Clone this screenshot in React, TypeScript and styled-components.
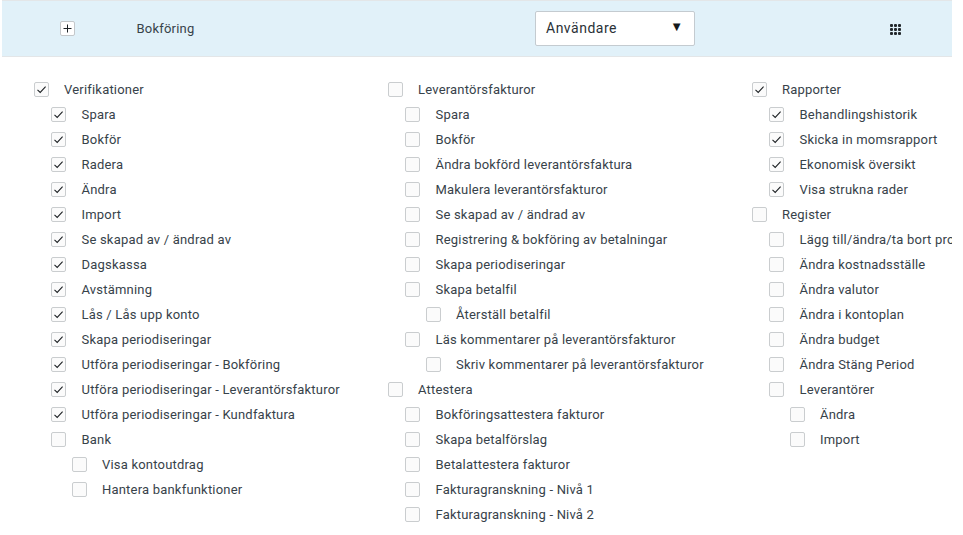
import styled, { createGlobalStyle } from "styled-components";

type Item = { label: string; level: number; checked?: boolean };

const col1: Item[] = [
  { label: "Verifikationer", level: 0, checked: true },
  { label: "Spara", level: 1, checked: true },
  { label: "Bokför", level: 1, checked: true },
  { label: "Radera", level: 1, checked: true },
  { label: "Ändra", level: 1, checked: true },
  { label: "Import", level: 1, checked: true },
  { label: "Se skapad av / ändrad av", level: 1, checked: true },
  { label: "Dagskassa", level: 1, checked: true },
  { label: "Avstämning", level: 1, checked: true },
  { label: "Lås / Lås upp konto", level: 1, checked: true },
  { label: "Skapa periodiseringar", level: 1, checked: true },
  { label: "Utföra periodiseringar - Bokföring", level: 1, checked: true },
  { label: "Utföra periodiseringar - Leverantörsfakturor", level: 1, checked: true },
  { label: "Utföra periodiseringar - Kundfaktura", level: 1, checked: true },
  { label: "Bank", level: 1 },
  { label: "Visa kontoutdrag", level: 2 },
  { label: "Hantera bankfunktioner", level: 2 },
];

const col2: Item[] = [
  { label: "Leverantörsfakturor", level: 0 },
  { label: "Spara", level: 1 },
  { label: "Bokför", level: 1 },
  { label: "Ändra bokförd leverantörsfaktura", level: 1 },
  { label: "Makulera leverantörsfakturor", level: 1 },
  { label: "Se skapad av / ändrad av", level: 1 },
  { label: "Registrering & bokföring av betalningar", level: 1 },
  { label: "Skapa periodiseringar", level: 1 },
  { label: "Skapa betalfil", level: 1 },
  { label: "Återställ betalfil", level: 2 },
  { label: "Läs kommentarer på leverantörsfakturor", level: 1 },
  { label: "Skriv kommentarer på leverantörsfakturor", level: 2 },
  { label: "Attestera", level: 0 },
  { label: "Bokföringsattestera fakturor", level: 1 },
  { label: "Skapa betalförslag", level: 1 },
  { label: "Betalattestera fakturor", level: 1 },
  { label: "Fakturagranskning - Nivå 1", level: 1 },
  { label: "Fakturagranskning - Nivå 2", level: 1 },
];

const col3: Item[] = [
  { label: "Rapporter", level: 0, checked: true },
  { label: "Behandlingshistorik", level: 1, checked: true },
  { label: "Skicka in momsrapport", level: 1, checked: true },
  { label: "Ekonomisk översikt", level: 1, checked: true },
  { label: "Visa strukna rader", level: 1, checked: true },
  { label: "Register", level: 0 },
  { label: "Lägg till/ändra/ta bort projekt", level: 1 },
  { label: "Ändra kostnadsställe", level: 1 },
  { label: "Ändra valutor", level: 1 },
  { label: "Ändra i kontoplan", level: 1 },
  { label: "Ändra budget", level: 1 },
  { label: "Ändra Stäng Period", level: 1 },
  { label: "Leverantörer", level: 1 },
  { label: "Ändra", level: 2 },
  { label: "Import", level: 2 },
];

const columns = [
  { items: col1, width: 354 },
  { items: col2, width: 364 },
  { items: col3, width: 200 },
];

export default function App() {
  return (
    <Page>
      <GlobalStyle />
      <Header>
        <ExpandCell>
          <ExpandButton>
            <svg width="9" height="9" viewBox="0 0 9 9">
              <path d="M4.5 0.5v8M0.5 4.5h8" stroke="#1c2226" strokeWidth="1" fill="none" />
            </svg>
          </ExpandButton>
        </ExpandCell>
        <Title>Bokföring</Title>
        <UserSelect>
          <SelectText>Användare</SelectText>
          <Arrow>▼</Arrow>
        </UserSelect>
        <GridIcon>
          {Array.from({ length: 9 }).map((_, i) => (
            <i key={i} />
          ))}
        </GridIcon>
      </Header>
      <Columns>
        {columns.map((column, c) => (
          <Column key={c} $width={column.width}>
            {column.items.map((item, i) => (
              <Row key={i} $level={item.level}>
                <Box>
                  {item.checked && (
                    <svg width="11" height="11" viewBox="0 0 11 11">
                      <path
                        d="M1.5 5.8 4.2 8.4 9.6 2.6"
                        stroke="#1a1e21"
                        strokeWidth="1.05"
                        fill="none"
                      />
                    </svg>
                  )}
                </Box>
                <Label $level={item.level}>{item.label}</Label>
              </Row>
            ))}
          </Column>
        ))}
      </Columns>
    </Page>
  );
}

const GlobalStyle = createGlobalStyle`
  html, body {
    margin: 0;
    padding: 0;
    background: #fff;
    overflow: hidden;
  }
  body {
    font-family: Roboto, "Liberation Sans", sans-serif;
    color: #37424a;
  }
`;

const Page = styled.div`
  width: 950px;
  height: 535px;
  margin-left: 2px;
  overflow: hidden;
`;

const Header = styled.div`
  height: 55px;
  background: #e1f1f9;
  border-top: 1px solid #e3e6e8;
  border-bottom: 1px solid #e3e6e8;
  display: flex;
  align-items: center;
`;

const ExpandCell = styled.div`
  width: 134px;
  padding-left: 58px;
  box-sizing: border-box;
  display: flex;
`;

const ExpandButton = styled.div`
  width: 15px;
  height: 15px;
  box-sizing: border-box;
  background: #fff;
  border: 1px solid #c4c8cb;
  border-radius: 2px;
  display: flex;
  align-items: center;
  justify-content: center;
`;

const Title = styled.div`
  width: 399px;
  padding-left: 0.5px;
  box-sizing: border-box;
  font-size: 13px;
  letter-spacing: 0.2px;
  margin-top: -1px;
`;

const UserSelect = styled.div`
  width: 160px;
  height: 35px;
  box-sizing: border-box;
  padding: 0 11px 0 10px;
  background: #fff;
  border: 1px solid #c4cbd0;
  border-radius: 2px;
  display: flex;
  align-items: center;
  justify-content: space-between;
  font-size: 14px;
  letter-spacing: 0.5px;
  color: #2a3137;
`;

const SelectText = styled.span`
  margin-top: -1px;
`;

const Arrow = styled.span`
  font-size: 13px;
  letter-spacing: 0;
  color: #15191c;
  margin-top: -4px;
`;

const GridIcon = styled.div`
  margin-left: 195px;
  margin-top: 2px;
  width: 11px;
  display: grid;
  grid-template-columns: repeat(3, 3px);
  grid-auto-rows: 3px;
  gap: 1px;

  i {
    background: #22282c;
    border-radius: 1px;
  }
`;

const Columns = styled.div`
  display: flex;
  padding: 20px 0 0 32px;
`;

const Column = styled.div<{ $width: number }>`
  flex: 0 0 ${(props) => props.$width}px;
  width: ${(props) => props.$width}px;
  display: flex;
  flex-direction: column;
`;

const Row = styled.div<{ $level: number }>`
  height: 25px;
  display: flex;
  align-items: center;
  white-space: nowrap;
  padding-left: ${(props) => [0, 17, 38][props.$level]}px;
  gap: 15px;
`;

const Box = styled.div`
  flex: none;
  width: 15px;
  height: 15px;
  box-sizing: border-box;
  background: #fbfbfb;
  border: 1px solid #cacdcf;
  border-radius: 2px;
  display: flex;
  align-items: center;
  justify-content: center;
`;

const Label = styled.span<{ $level: number }>`
  font-size: 13px;
  letter-spacing: 0.2px;
  color: #37424a;
  margin-left: ${(props) => (props.$level === 1 ? 0.5 : 0)}px;
`;
